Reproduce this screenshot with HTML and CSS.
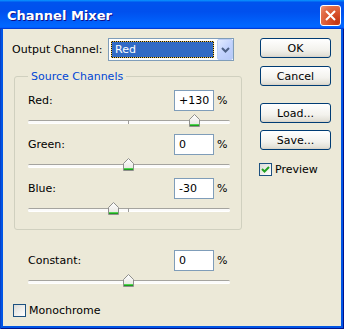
FILE: index.html
```html
<!DOCTYPE html>
<html>
<head>
    <meta charset="UTF-8">
    <title>Channel Mixer</title>
    <link rel="stylesheet" href="styles.css">
</head>
<body>
    <svg class="defs" width="0" height="0">
        <defs>
            <linearGradient id="thumbFill" x1="0" y1="0" x2="0" y2="1">
                <stop offset="0" stop-color="#ffffff"/>
                <stop offset="1" stop-color="#e4e3dc"/>
            </linearGradient>
            <symbol id="thumb" viewBox="0 0 11 13">
                <path d="M5.5 0.5 L10.5 5.5 V12.5 H0.5 V5.5 Z" fill="url(#thumbFill)" stroke="#8f8f8c"/>
                <rect x="1" y="10" width="9" height="1" fill="#4fd24f"/>
                <rect x="1" y="11" width="9" height="1" fill="#1e9e1e"/>
            </symbol>
        </defs>
    </svg>

    <div class="window">
        <div class="titlebar">
            <span class="title">Channel Mixer</span>
            <span class="close">
                <svg width="11" height="11" viewBox="0 0 11 11"><path d="M1 1 L10 10 M10 1 L1 10" stroke="#fff" stroke-width="2"/></svg>
            </span>
        </div>

        <div class="client">
            <div class="main">
                <div class="output-row">
                    <span class="output-label">Output Channel:</span>
                    <div class="combo">
                        <span class="combo-value">Red</span>
                        <span class="combo-btn">
                            <svg width="9" height="6" viewBox="0 0 9 6"><path d="M1 1 L4.5 4.5 L8 1" fill="none" stroke="#4d6185" stroke-width="2"/></svg>
                        </span>
                    </div>
                </div>

                <fieldset class="group">
                    <legend>Source Channels</legend>

                    <div class="param">
                        <div class="param-head">
                            <span class="param-label">Red:</span>
                            <span class="field">+130</span>
                            <span class="pct">%</span>
                        </div>
                        <div class="slider">
                            <div class="track"></div>
                            <span class="tick"></span>
                            <svg class="thumb" width="11" height="13" style="left: 161px"><use href="#thumb"/></svg>
                        </div>
                    </div>

                    <div class="param">
                        <div class="param-head">
                            <span class="param-label">Green:</span>
                            <span class="field">0</span>
                            <span class="pct">%</span>
                        </div>
                        <div class="slider">
                            <div class="track"></div>
                            <span class="tick"></span>
                            <svg class="thumb" width="11" height="13" style="left: 95px"><use href="#thumb"/></svg>
                        </div>
                    </div>

                    <div class="param">
                        <div class="param-head">
                            <span class="param-label">Blue:</span>
                            <span class="field">-30</span>
                            <span class="pct">%</span>
                        </div>
                        <div class="slider">
                            <div class="track"></div>
                            <span class="tick"></span>
                            <svg class="thumb" width="11" height="13" style="left: 80px"><use href="#thumb"/></svg>
                        </div>
                    </div>
                </fieldset>

                <div class="param constant">
                    <div class="param-head">
                        <span class="param-label">Constant:</span>
                        <span class="field">0</span>
                        <span class="pct">%</span>
                    </div>
                    <div class="slider">
                        <div class="track"></div>
                        <span class="tick"></span>
                        <svg class="thumb" width="11" height="13" style="left: 95px"><use href="#thumb"/></svg>
                    </div>
                </div>

                <label class="check mono"><span class="box"></span>Monochrome</label>
            </div>

            <div class="side">
                <button class="btn">OK</button>
                <button class="btn btn-cancel">Cancel</button>
                <button class="btn btn-load">Load...</button>
                <button class="btn btn-save">Save...</button>
                <label class="check preview">
                    <span class="box">
                        <svg width="11" height="11" viewBox="0 0 11 11"><path d="M2 5 L4.5 7.5 L9 3" fill="none" stroke="#21a121" stroke-width="2"/></svg>
                    </span>Preview
                </label>
            </div>
        </div>
    </div>
</body>
</html>
```

FILE: styles.css
```css
* {
    box-sizing: border-box;
}
body {
    margin: 0;
    font-family: "DejaVu Sans", sans-serif;
    font-size: 11px;
    color: #000;
}
.defs {
    position: absolute;
}
.window {
    width: 344px;
    height: 329px;
    display: flex;
    flex-direction: column;
    background: #0055e5;
    box-shadow: inset 1px 0 #0841c8, inset -1px 0 #00138c, inset 0 -1px #00138c;
}
.titlebar {
    height: 29px;
    display: flex;
    align-items: flex-start;
    justify-content: space-between;
    padding: 0 3px 0 7px;
    background: linear-gradient(180deg, #0997ff, #0053ee 8%, #0050ee 40%, #0066ff 88%, #0066ff 93%, #005bff 95%, #003dd7 96%, #003dd7);
}
.title {
    margin-top: 8px;
    line-height: 15px;
    font-size: 13px;
    font-weight: bold;
    color: #fff;
    text-shadow: 1px 1px #0f1089;
}
.close {
    margin-top: 5px;
    width: 21px;
    height: 21px;
    border: 1px solid #fff;
    border-radius: 3px;
    display: flex;
    align-items: center;
    justify-content: center;
    background: radial-gradient(circle at 85% 85%, #c23512 0, #d8522c 40%, #e2704b 75%, #f09a7c 100%);
}
.client {
    flex: 1;
    margin: 0 3px 3px;
    background: #ece9d8;
    display: flex;
}
.main {
    width: 239px;
    padding-left: 9px;
}
.output-row {
    margin-top: 9px;
    display: flex;
    align-items: center;
}
.output-label {
    width: 96px;
}
.combo {
    width: 126px;
    height: 23px;
    border: 1px solid #7f9db9;
    background: #fff;
    display: flex;
    align-items: center;
    padding-left: 2px;
}
.combo-value {
    width: 103px;
    height: 17px;
    line-height: 15px;
    padding-left: 3px;
    color: #fff;
    background: #316ac5;
    border: 1px solid #111;
    outline: 1px dotted #f0c850;
    outline-offset: -1px;
}
.combo-btn {
    margin-left: auto;
    width: 16px;
    height: 21px;
    border: 1px solid #bacdf6;
    border-radius: 2px;
    background: linear-gradient(135deg, #e2ebfe, #c3d3fd 50%, #b6c8f7);
    display: flex;
    align-items: center;
    justify-content: center;
}
.group {
    margin: 9px 0 0 2px;
    width: 228px;
    border: 1px solid #d0d0bf;
    border-radius: 3px;
    padding: 7px 11px 14px 13px;
    min-width: 0;
}
.group legend {
    padding: 0 3px;
    line-height: 13px;
    color: #0046d5;
}
.param {
    width: 202px;
    margin-bottom: 7px;
}
.group .param:last-child {
    margin-bottom: 0;
}
.param-head {
    height: 21px;
    display: flex;
    align-items: center;
}
.param-label {
    flex: 1;
}
.field {
    width: 40px;
    height: 21px;
    line-height: 19px;
    padding: 0 4px;
    border: 1px solid #7f9db9;
    background: #fff;
}
.pct {
    width: 13px;
    margin-left: 3px;
}
.slider {
    position: relative;
    height: 13px;
    margin-top: 3px;
    padding-top: 6px;
}
.track {
    height: 3px;
    border-top: 1px solid #a5a49f;
    border-radius: 2px;
    background: #fbfbfa;
    box-shadow: 0 1px #fff;
}
.tick {
    position: absolute;
    left: 100px;
    top: 6px;
    width: 1px;
    height: 4px;
    background: #9d9c99;
}
.thumb {
    position: absolute;
    top: 0;
}
.constant {
    margin: 20px 0 0 16px;
}
.check {
    display: flex;
    align-items: center;
    height: 13px;
}
.box {
    width: 13px;
    height: 13px;
    margin-right: 3px;
    border: 1px solid #1c5180;
    background: linear-gradient(135deg, #dcdcd7, #fff);
    display: flex;
    align-items: center;
    justify-content: center;
}
.mono {
    margin: 17px 0 0 1px;
}
.side {
    margin-left: 18px;
    padding-top: 9px;
    display: flex;
    flex-direction: column;
    align-items: flex-start;
}
.btn {
    width: 71px;
    height: 20px;
    padding: 0;
    border: 1px solid #003c74;
    border-radius: 3px;
    background: linear-gradient(#ffffff, #f3f2ed 60%, #e3e1d8 90%, #d6d0c5);
    font-family: "DejaVu Sans", sans-serif;
    font-size: 11px;
    color: #000;
}
.btn-cancel {
    margin-top: 8px;
}
.btn-load {
    margin-top: 17px;
}
.btn-save {
    margin-top: 7px;
}
.preview {
    margin: 13px 0 0 -1px;
}
```
